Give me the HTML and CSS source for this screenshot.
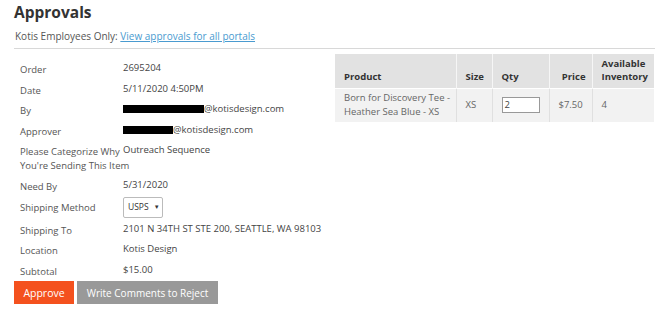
FILE: index.html
```html
<!DOCTYPE html>
<html>
<head>
<meta charset="utf-8">
<link rel="stylesheet" href="styles.css">
</head>
<body>
<div class="page">
  <h1 class="title">Approvals</h1>
  <p class="sub">Kotis Employees Only: <a href="#" class="link">View approvals for all portals</a></p>
  <div class="rule"></div>
  <div class="main">
    <div class="left">
      <div class="details">
        <div class="lbl">Order</div><div class="val">2695204</div>
        <div class="lbl">Date</div><div class="val">5/11/2020 4:50PM</div>
        <div class="lbl">By</div><div class="val"><span class="redact r1"></span>@kotisdesign.com</div>
        <div class="lbl">Approver</div><div class="val"><span class="redact r2"></span>@kotisdesign.com</div>
        <div class="lbl wrap">Please Categorize Why You're Sending This Item</div><div class="val">Outreach Sequence</div>
        <div class="lbl">Need By</div><div class="val">5/31/2020</div>
        <div class="lbl">Shipping Method</div><div class="val sel"><span class="select">USPS <span class="arrow">▼</span></span></div>
        <div class="lbl">Shipping To</div><div class="val">2101 N 34TH ST STE 200, SEATTLE, WA 98103</div>
        <div class="lbl">Location</div><div class="val">Kotis Design</div>
        <div class="lbl">Subtotal</div><div class="val">$15.00</div>
      </div>
      <div class="actions">
        <button class="btn approve">Approve</button>
        <button class="btn reject">Write Comments to Reject</button>
      </div>
    </div>
    <div class="right">
      <table class="items">
        <thead>
          <tr>
            <th class="c-prod">Product</th>
            <th class="c-size">Size</th>
            <th class="c-qty">Qty</th>
            <th class="c-price">Price</th>
            <th class="c-inv">Available Inventory</th>
          </tr>
        </thead>
        <tbody>
          <tr>
            <td class="c-prod">Born for Discovery Tee - Heather Sea Blue - XS</td>
            <td class="c-size">XS</td>
            <td class="c-qty"><span class="qty">2</span></td>
            <td class="c-price">$7.50</td>
            <td class="c-inv">4</td>
          </tr>
        </tbody>
      </table>
    </div>
  </div>
</div>
</body>
</html>
```
FILE: styles.css
```css
* { box-sizing: border-box; }
body {
  margin: 0;
  background: #fff;
  font-family: "Open Sans", "Noto Sans", sans-serif;
  color: #555;
  font-size: 9.5px;
}
.page {
  padding: 0 15px 0 14px;
}
.title {
  margin: 0;
  padding-top: 1px;
  font-size: 15.5px;
  font-weight: 700;
  color: #333;
  line-height: 22px;
}
.sub {
  margin: 7px 0 0 1px;
  font-size: 10px;
  line-height: 13px;
  color: #555;
}
.link {
  color: #4a9bd0;
  text-decoration: underline;
}
.rule {
  margin-top: 5px;
  height: 1px;
  background: #d8d8d8;
}
.main {
  display: flex;
}
.left {
  width: 321px;
}
.details {
  display: grid;
  grid-template-columns: 103px 1fr;
  padding: 10px 0 0 6px;
}
.lbl {
  line-height: 14px;
  padding: 4px 0 2.6px;
  color: #555;
}
.lbl.wrap { width: 112px; }
.val {
  line-height: 14px;
  padding: 2px 0 4.6px;
  color: #444;
}
.val.sel {
  padding: 0 0 2px;
}
.redact {
  display: inline-block;
  background: #000;
  height: 8px;
  vertical-align: -1px;
}
.r1 { width: 81px; }
.r2 { width: 50px; }
.select {
  display: inline-flex;
  align-items: center;
  height: 21px;
  width: 40px;
  border: 1px solid #bbb;
  border-radius: 2px;
  padding-left: 4px;
  font-size: 8.5px;
  color: #333;
}
.arrow {
  font-size: 6px;
  margin-left: 5px;
}
.actions {
  display: flex;
  gap: 3px;
}
.btn {
  border: none;
  height: 23px;
  font-family: "Open Sans", "Noto Sans", sans-serif;
  font-size: 10px;
  color: #fff;
  padding: 0;
}
.approve {
  width: 60px;
  background: #f4511e;
  font-size: 10.5px;
}
.reject {
  width: 141px;
  background: #999;
}
.right {
  padding-top: 5px;
}
.items {
  border-collapse: collapse;
  width: 319px;
  font-size: 9.5px;
}
.items th {
  background: #e2e2e2;
  color: #333;
  font-weight: 700;
  text-align: left;
  vertical-align: bottom;
  height: 34px;
  padding: 0 4px 5px 9px;
  line-height: 13px;
  border-right: 1px solid #f6f6f6;
}
.items td {
  background: #f2f2f2;
  color: #666;
  height: 34px;
  padding: 0 4px 0 9px;
  line-height: 14px;
  border-right: 1px solid #e0e0e0;
  border-top: 1px solid #fff;
}
.items th:last-child, .items td:last-child { border-right: none; }
.c-prod { width: 121px; }
.c-size { width: 36px; }
.c-qty { width: 57px; }
.c-price { width: 43px; }
.items th.c-price { text-align: right; padding-right: 6px; }
.qty {
  display: inline-block;
  width: 38px;
  height: 16px;
  border: 1px solid #999;
  background: #fff;
  padding-left: 2px;
  line-height: 14px;
  color: #444;
}
```
